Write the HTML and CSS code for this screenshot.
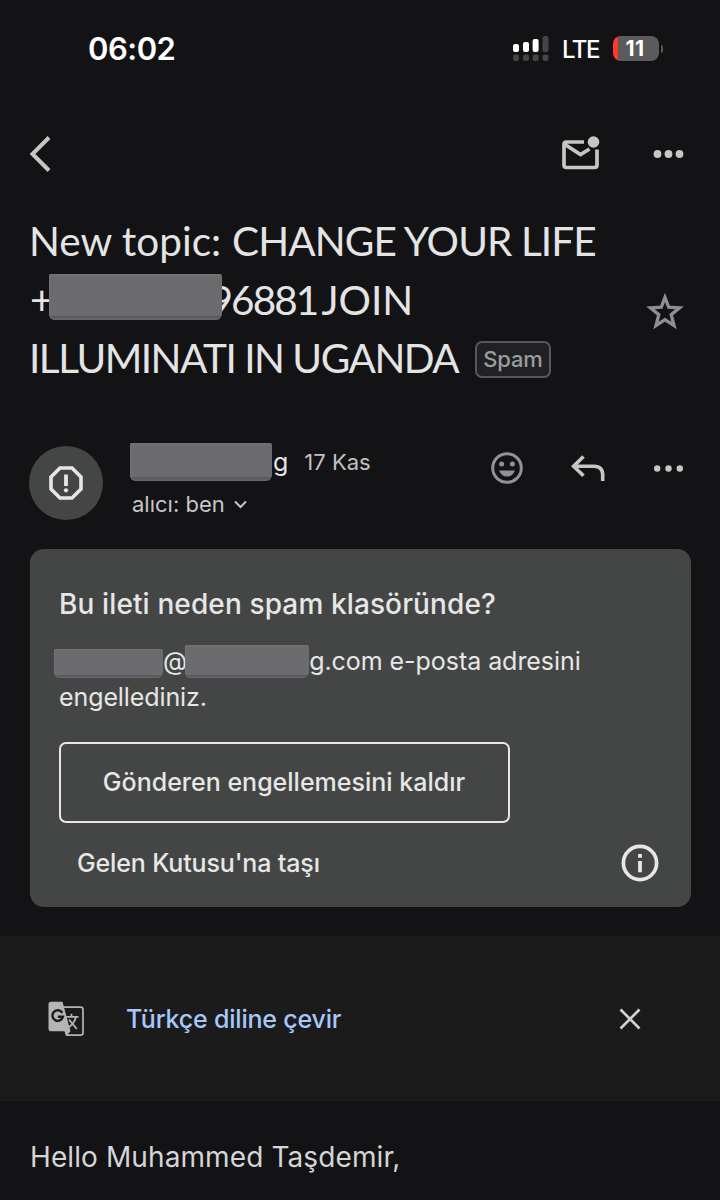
FILE: index.html
```html
<!DOCTYPE html>
<html lang="tr">
<head>
<meta charset="utf-8">
<title>Mail</title>
<link rel="stylesheet" href="styles.css">
</head>
<body>
<main class="screen">
  <div class="status">
    <span class="time">06:02</span>
    <span class="indicators">
      <svg class="signal" width="36" height="25" viewBox="0 0 36 25">
        <g fill="#fff"><rect x="0" y="8" width="6" height="8" rx="2"/><rect x="10" y="6" width="6" height="10" rx="2"/><rect x="19.600" y="3" width="6" height="13" rx="2"/></g>
        <g fill="#454547"><rect x="29.500" y="0" width="6" height="16" rx="2"/><rect x="0" y="18.500" width="6" height="6.500" rx="2"/><rect x="10" y="18.500" width="6" height="6.500" rx="2"/><rect x="19.600" y="18.500" width="6" height="6.500" rx="2"/><rect x="29.500" y="18.500" width="6" height="6.500" rx="2"/></g>
      </svg>
      <span class="network">LTE</span>
      <span class="battery"><span class="level">11</span><i class="cap"></i></span>
    </span>
  </div>

  <nav class="toolbar">
    <svg width="24" height="38" viewBox="0 0 24 38" fill="none" stroke="#c6c6c7" stroke-width="4"><path d="M20 2.500 3.500 19 20 35.500"/></svg>
    <svg class="unread" width="38" height="34" viewBox="0 0 38 34">
      <path d="M22 6H4.500Q2 6 2 8.500V29Q2 31.500 4.500 31.500H32.500Q35 31.500 35 29V13.500M3 8.500 18.500 18.500 27.500 13" fill="none" stroke="#c6c6c7" stroke-width="3.700"/>
      <circle cx="31.500" cy="6" r="5.800" fill="#c6c6c7"/>
    </svg>
    <svg width="31" height="9" viewBox="0 0 31 9" fill="#c6c6c7"><circle cx="4.500" cy="4" r="3.900"/><circle cx="15.500" cy="4" r="3.900"/><circle cx="26.500" cy="4" r="3.900"/></svg>
  </nav>

  <header class="subject">
    <h1 class="title">
      <span class="line l1"><span class="topic">New topic:</span><span>CHANGE YOUR LIFE</span></span>
      <span class="line l2"><span>+</span><span class="mask phone"></span><span class="digits">96881</span><span class="join">JOIN</span></span>
      <span class="line l3"><span>ILLUMINATI IN UGANDA</span><span class="tag">Spam</span></span>
    </h1>
    <svg class="star" width="38" height="37" viewBox="0 0 38 37"><path d="M19 4.500 22.700 14.200 33.500 14.900 25.200 21.600 28 32.500 19 26.600 10 32.500 12.800 21.600 4.500 14.900 15.300 14.200Z" fill="none" stroke="#8f8f91" stroke-width="3.300"/></svg>
  </header>

  <section class="sender">
    <span class="avatar"><svg width="34" height="34" viewBox="0 0 34 34"><path d="M11 2H23L32 11V23L23 32H11L2 23V11Z" fill="none" stroke="#e5e6e5" stroke-width="3.600"/><path d="M15.100 8.500H18.900V20H15.100Z" fill="#e5e6e5"/><circle cx="17" cy="24.300" r="2.100" fill="#e5e6e5"/></svg></span>
    <div class="who">
      <div class="name"><span class="mask person"></span><span class="tail">g</span><span class="date">17 Kas</span></div>
      <div class="to"><span>alıcı: ben</span><svg width="13" height="9" viewBox="0 0 13 9"><path d="M1 1.500 6.500 7 12 1.500" fill="none" stroke="#c6c6c7" stroke-width="2"/></svg></div>
    </div>
    <div class="actions">
      <svg width="32" height="32" viewBox="0 0 32 32"><circle cx="16" cy="16" r="14.300" fill="none" stroke="#929294" stroke-width="3"/><g fill="#929294"><circle cx="10.600" cy="12" r="2.500"/><circle cx="21.400" cy="12" r="2.500"/><path d="M8 18.500H24Q21.500 24.500 16 24.500T8 18.500Z"/></g></svg>
      <svg width="34" height="26" viewBox="0 0 34 26" fill="none" stroke="#c6c6c7" stroke-width="3.600"><path d="M12.500 1.500 2.600 11.200 12.500 20.800M2.800 11.200H23Q31.700 11.200 31.700 20V26"/></svg>
      <svg width="31" height="8" viewBox="0 0 31 8" fill="#c6c6c7"><circle cx="4.200" cy="4.500" r="3.200"/><circle cx="15.500" cy="4.500" r="3.200"/><circle cx="26.800" cy="4.500" r="3.200"/></svg>
    </div>
  </section>

  <section class="card">
    <h2 class="why">Bu ileti neden spam klasöründe?</h2>
    <p class="reason"><span class="addr"><span class="mask user"></span><span class="at">@</span><span class="mask domain"></span><span class="rest">g.com e-posta adresini</span></span><span class="blocked">engellediniz.</span></p>
    <div class="unblock"><span>Gönderen engellemesini kaldır</span></div>
    <div class="foot">
      <span class="move">Gelen Kutusu'na taşı</span>
      <svg width="38" height="38" viewBox="0 0 38 38"><circle cx="19" cy="19" r="16.600" fill="none" stroke="#e6e7e6" stroke-width="3.700"/><path d="M17.100 10H20.900V13.800H17.100ZM17.100 17H20.900V28.200H17.100Z" fill="#e6e7e6"/></svg>
    </div>
  </section>

  <section class="translate">
    <svg width="37" height="36" viewBox="0 0 37 36">
      <path d="M15 6.200H32.500Q35 6.200 35 8.500V32Q35 34.200 32.500 34.200H18.500" fill="none" stroke="#b5b5b5" stroke-width="1.700"/>
      <path d="M3 .8H14.500L22.500 30.300 18 35.200 16.500 30.300H3Q.5 30.300.5 27.800V3.300Q.5.800 3 .8Z" fill="#b5b5b5"/>
      <path d="M14.300 11.800A5.300 5.300 0 1 0 14.900 15.800H9.900" fill="none" stroke="#1c1c1c" stroke-width="2.400"/>
      <path d="M18.200 15.800H30.500M23.500 12.800V15.800M28 16Q26.200 22.500 19.800 27.200M21 18.500 28.800 28" fill="none" stroke="#b5b5b5" stroke-width="1.800"/>
    </svg>
    <span class="link">Türkçe diline çevir</span>
    <svg class="close" width="22" height="22" viewBox="0 0 22 22"><path d="M1.500 1.500 20.500 20.500M20.500 1.500 1.500 20.500" stroke="#d0d0d0" stroke-width="2.700"/></svg>
  </section>

  <p class="body"><span>Hello Muhammed Taşdemir,</span></p>
</main>
</body>
</html>
```
FILE: styles.css
```css
* { box-sizing: border-box; }
body { margin: 0; background: #131315; }
h1, h2, p { margin: 0; font-weight: 400; }
svg { display: block; flex: none; overflow: visible; }
.screen { width: 720px; height: 1200px; overflow: hidden; display: flex; flex-direction: column; background: #131315; color: #e4e4e5; font-family: Inter, sans-serif; white-space: nowrap; }
.screen > * { flex: none; }

.status { height: 97px; padding: 0 57px 0 88px; display: flex; justify-content: space-between; align-items: center; color: #fff; }
.time { font-size: 31px; font-weight: 600; letter-spacing: -.5px; }
.indicators { display: flex; align-items: center; }
.network { margin-left: 13px; width: 51px; font-size: 24px; font-weight: 500; letter-spacing: -1.500px; padding-top: 1px; }
.battery { display: flex; align-items: center; }
.level { width: 46px; height: 25px; border-radius: 8px; background: linear-gradient(90deg, #ff3b30 5px, #5b5b5c 5px); font-size: 21px; font-weight: 700; line-height: 25px; text-align: center; letter-spacing: .5px; padding-right: 2px; }
.cap { width: 2px; height: 8px; margin-left: 2px; border-radius: 0 3px 3px 0; background: #5b5b5c; }

.toolbar { height: 114px; padding: 0 36px 0 29px; display: flex; align-items: center; }
.unread { margin: -3px 53px 0 auto; }

.subject { height: 177px; padding: 1px 36px 0 30px; display: flex; justify-content: space-between; }
.title { font-family: Lato, sans-serif; font-size: 40.500px; }
.line { display: flex; align-items: center; height: 58.500px; line-height: 58.500px; }
.l1 { letter-spacing: -.900px; margin-left: -1px; }
.topic { width: 203px; letter-spacing: 0; }
.l3 { letter-spacing: -1.500px; margin-left: -1px; }
.mask { flex: none; background: linear-gradient(#747476, #6b6b6d 8%, #6c6c6e 90%, #555560 91%, #68686d); border-radius: 2px 2px 6px 6px; box-shadow: inset 1px 0 #6e7086; z-index: 1; }
.phone { width: 173px; height: 46px; margin: -5px 0 0 -5px; }
.digits { margin-left: -12px; letter-spacing: -1.900px; }
.join { margin-left: 4px; }
.tag { margin: 3px 0 0 17px; height: 37px; padding: 0 6px; border: 2px solid #57585b; border-radius: 7px; background: #202125; color: #9b9ca0; font: 500 22px/33px Inter, sans-serif; letter-spacing: -.2px; }
.star { margin-top: 81px; }

.sender { height: 161px; padding: 58px 36px 0 29px; display: flex; align-items: flex-start; }
.avatar { width: 74px; height: 74px; border-radius: 50%; background: #444645; display: flex; align-items: center; justify-content: center; }
.who { margin: -4px 0 0 27px; width: 260px; }
.name { display: flex; align-items: center; height: 40px; font-size: 25px; }
.person { width: 142px; height: 38px; }
.tail { margin-left: 1px; }
.date { margin-left: 16px; font-size: 22px; color: #c0c0c2; letter-spacing: 0; }
.to { display: flex; align-items: center; gap: 9px; height: 30px; margin: 7px 0 0 2px; color: #c6c6c7; font-size: 22px; letter-spacing: 0; }
.actions { display: flex; align-items: center; justify-content: space-between; width: 193px; height: 44px; margin-left: auto; }

.card { width: 661px; height: 358px; margin: 0 0 29px 29.500px; padding: 35px 32px 0 29.500px; border-radius: 14px; background: #444645; color: #e6e7e6; }
.why { font: 500 28px/40px Inter, sans-serif; letter-spacing: .120px; }
.reason { margin-top: 19px; font-size: 25px; line-height: 36px; }
.addr { display: flex; align-items: center; height: 36px; margin-left: -5px; }
.user { width: 109px; height: 29px; margin-top: 4px; }
.at { letter-spacing: -2px; }
.domain { width: 124px; height: 33px; }
.rest { letter-spacing: -.05px; }
.blocked { display: block; letter-spacing: -.1px; }
.unblock { width: 451px; height: 81px; margin: 27px 0 0 -.500px; padding-bottom: 2px; border: 2px solid #e6e7e6; border-radius: 7px; display: flex; align-items: center; justify-content: center; font: 500 25px Inter, sans-serif; letter-spacing: 0; }
.foot { display: flex; align-items: center; justify-content: space-between; height: 80px; padding-left: 18px; }
.move { font: 500 25px Inter, sans-serif; letter-spacing: -.150px; }

.translate { height: 165px; padding: 0 79px 0 48px; display: flex; align-items: center; background: #1b1b1b; }
.link { margin-left: 41px; font: 500 25px Inter, sans-serif; letter-spacing: -.2px; color: #a8c7fa; }
.close { margin-left: auto; }
.body { padding: 38px 0 0 30px; font-size: 28px; line-height: 36px; letter-spacing: .1px; color: #d5d5d6; }
```
